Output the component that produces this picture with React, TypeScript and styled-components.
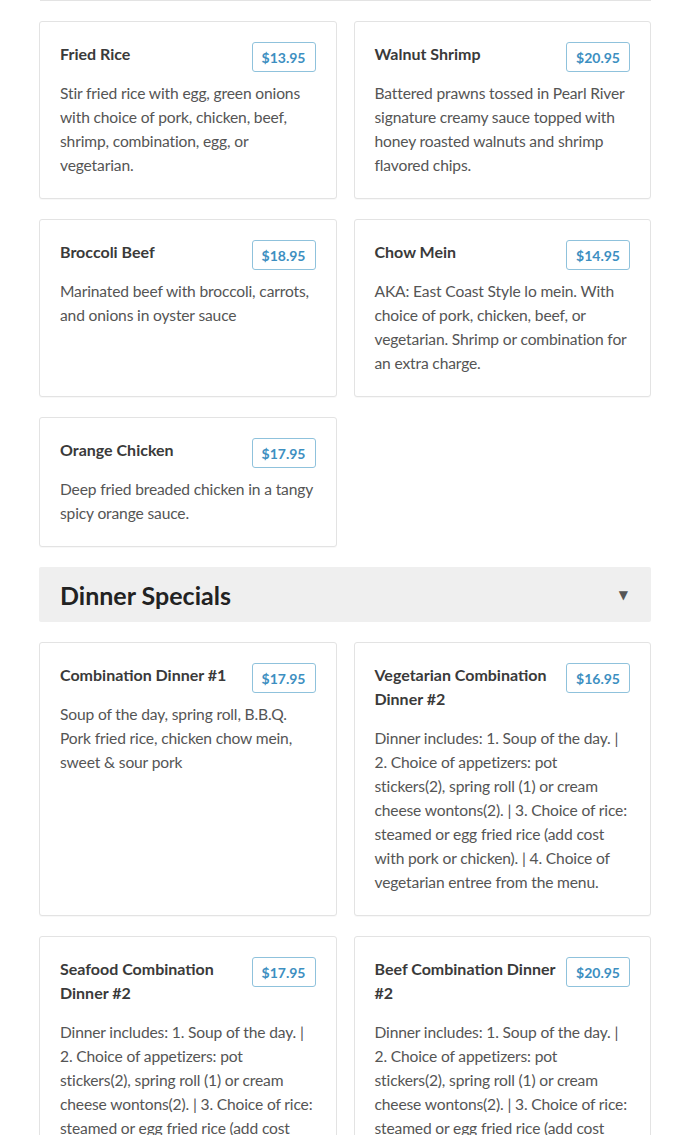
import { FC } from "react";
import styled, { createGlobalStyle } from "styled-components";

interface MenuItem {
  name: string
  price: string
  description: string
}

const lunchTail: MenuItem[] = [
  { name: 'Fried Rice', price: '$13.95', description: 'Stir fried rice with egg, green onions with choice of pork, chicken, beef, shrimp, combination, egg, or vegetarian.' },
  { name: 'Walnut Shrimp', price: '$20.95', description: 'Battered prawns tossed in Pearl River signature creamy sauce topped with honey roasted walnuts and shrimp flavored chips.' },
  { name: 'Broccoli Beef', price: '$18.95', description: 'Marinated beef with broccoli, carrots, and onions in oyster sauce' },
  { name: 'Chow Mein', price: '$14.95', description: 'AKA: East Coast Style lo mein. With choice of pork, chicken, beef, or vegetarian. Shrimp or combination for an extra charge.' },
  { name: 'Orange Chicken', price: '$17.95', description: 'Deep fried breaded chicken in a tangy spicy orange sauce.' },
];

const comboDesc = 'Dinner includes: 1. Soup of the day. | 2. Choice of appetizers: pot stickers(2), spring roll (1) or cream cheese wontons(2). | 3. Choice of rice: steamed or egg fried rice (add cost with pork or chicken). | 4. Choice of entree from the menu.';

const dinnerSpecials: MenuItem[] = [
  { name: 'Combination Dinner #1', price: '$17.95', description: 'Soup of the day, spring roll, B.B.Q. Pork fried rice, chicken chow mein, sweet & sour pork' },
  { name: 'Vegetarian Combination Dinner #2', price: '$16.95', description: 'Dinner includes: 1. Soup of the day. | 2. Choice of appetizers: pot stickers(2), spring roll (1) or cream cheese wontons(2). | 3. Choice of rice: steamed or egg fried rice (add cost with pork or chicken). | 4. Choice of vegetarian entree from the menu.' },
  { name: 'Seafood Combination Dinner #2', price: '$17.95', description: comboDesc },
  { name: 'Beef Combination Dinner #2', price: '$20.95', description: comboDesc },
];

const MenuCard: FC<{ item: MenuItem }> = ({ item }) => (
  <StyledCard>
    <StyledCardHeader>
      <StyledItemName>{item.name}</StyledItemName>
      <StyledPrice>{item.price}</StyledPrice>
    </StyledCardHeader>
    <StyledDescription>{item.description}</StyledDescription>
  </StyledCard>
);

const App: FC = () => (
  <>
    <GlobalStyle />
    <StyledPage>
      <StyledPrevEdge />
      <StyledGrid>
        {lunchTail.map(item => <MenuCard key={item.name} item={item} />)}
      </StyledGrid>

      <StyledSectionHeader>
        <StyledSectionTitle>Dinner Specials</StyledSectionTitle>
        <StyledCaret>▼</StyledCaret>
      </StyledSectionHeader>

      <StyledGrid>
        {dinnerSpecials.map(item => <MenuCard key={item.name} item={item} />)}
      </StyledGrid>
    </StyledPage>
  </>
);

const GlobalStyle = createGlobalStyle`
  html, body {
    margin: 0;
    padding: 0;
    background: #fff;
  }
  body {
    font-family: Lato, "Liberation Sans", sans-serif;
    color: #333;
  }
`;

const StyledPage = styled.div`
  padding: 0 39px;
  display: flex;
  flex-direction: column;
  gap: 20px;
`;

const StyledPrevEdge = styled.div`
  height: 1px;
  background: #e3e3e3;
  margin-left: 1px;
`;

const StyledGrid = styled.div`
  display: grid;
  grid-template-columns: 1fr 1fr;
  column-gap: 17px;
  row-gap: 20px;
`;

const StyledCard = styled.div`
  border: 1px solid #e3e3e3;
  border-radius: 3px;
  padding: 20px 20px 21px;
  background: #fff;
  box-shadow: 0 1px 1px rgba(0, 0, 0, .03);
`;

const StyledCardHeader = styled.div`
  display: flex;
  justify-content: space-between;
  align-items: flex-start;
  gap: 8px;
`;

const StyledItemName = styled.h3`
  margin: 0 0 15px;
  font-size: 16px;
  line-height: 24px;
  font-weight: 700;
  color: #3a3a3a;
`;

const StyledPrice = styled.span`
  flex-shrink: 0;
  height: 30px;
  box-sizing: border-box;
  padding: 0 9px;
  display: flex;
  align-items: center;
  border: 1px solid #8fc2dc;
  border-radius: 3px;
  font-size: 14px;
  font-weight: 700;
  color: #3d8fc1;
`;

const StyledDescription = styled.p`
  margin: 0;
  font-size: 15.6px;
  letter-spacing: -0.15px;
  line-height: 24px;
  color: #555;
`;

const StyledSectionHeader = styled.div`
  height: 55px;
  display: flex;
  align-items: center;
  justify-content: space-between;
  padding: 0 23px 0 21px;
  background: #efefef;
  border-radius: 2px;
`;

const StyledSectionTitle = styled.h2`
  margin: 0;
  font-size: 25px;
  font-weight: 700;
  color: #222;
`;

const StyledCaret = styled.span`
  font-size: 12px;
  color: #555;
  font-family: "DejaVu Sans", sans-serif;
`;

export default App;
